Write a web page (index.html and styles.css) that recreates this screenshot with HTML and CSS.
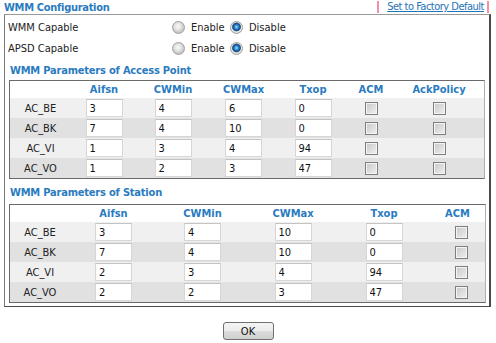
FILE: index.html
```html
<!DOCTYPE html>
<html lang="en">
<head>
<meta charset="utf-8">
<title>WMM Configuration</title>
<link rel="stylesheet" href="styles.css">
</head>
<body>
<div class="head">
	<span class="title">WMM Configuration</span>
	<span class="reset"><a href="#">Set to Factory Default</a></span>
</div>

<div class="box">
	<div class="opt">
		<span class="opt-label">WMM Capable</span>
		<label class="choice"><input type="radio" name="wmm"> Enable</label>
		<label class="choice"><input type="radio" name="wmm" checked> Disable</label>
	</div>
	<div class="opt">
		<span class="opt-label">APSD Capable</span>
		<label class="choice"><input type="radio" name="apsd"> Enable</label>
		<label class="choice"><input type="radio" name="apsd" checked> Disable</label>
	</div>

	<div class="sect">WMM Parameters of Access Point</div>
	<table class="params ap">
		<colgroup>
			<col class="c1"><col class="c2"><col class="c3"><col class="c4"><col class="c5"><col class="c6"><col class="c7">
		</colgroup>
		<tr class="hdr"><th></th><th>Aifsn</th><th>CWMin</th><th>CWMax</th><th>Txop</th><th>ACM</th><th>AckPolicy</th></tr>
		<tr class="odd"><td class="name">AC_BE</td><td><input class="num" value="3"></td><td><input class="num" value="4"></td><td><input class="num" value="6"></td><td><input class="num" value="0"></td><td><input type="checkbox" class="box-chk"></td><td><input type="checkbox" class="box-chk"></td></tr>
		<tr class="even"><td class="name">AC_BK</td><td><input class="num" value="7"></td><td><input class="num" value="4"></td><td><input class="num" value="10"></td><td><input class="num" value="0"></td><td><input type="checkbox" class="box-chk"></td><td><input type="checkbox" class="box-chk"></td></tr>
		<tr class="odd"><td class="name">AC_VI</td><td><input class="num" value="1"></td><td><input class="num" value="3"></td><td><input class="num" value="4"></td><td><input class="num" value="94"></td><td><input type="checkbox" class="box-chk"></td><td><input type="checkbox" class="box-chk"></td></tr>
		<tr class="even"><td class="name">AC_VO</td><td><input class="num" value="1"></td><td><input class="num" value="2"></td><td><input class="num" value="3"></td><td><input class="num" value="47"></td><td><input type="checkbox" class="box-chk"></td><td><input type="checkbox" class="box-chk"></td></tr>
	</table>

	<div class="sect sect2">WMM Parameters of Station</div>
	<table class="params sta">
		<colgroup>
			<col class="c1"><col class="c2"><col class="c3"><col class="c4"><col class="c5"><col class="c6">
		</colgroup>
		<tr class="hdr"><th></th><th>Aifsn</th><th>CWMin</th><th>CWMax</th><th>Txop</th><th>ACM</th></tr>
		<tr class="odd"><td class="name">AC_BE</td><td><input class="num" value="3"></td><td><input class="num" value="4"></td><td><input class="num" value="10"></td><td><input class="num" value="0"></td><td class="acm"><input type="checkbox" class="box-chk"></td></tr>
		<tr class="even"><td class="name">AC_BK</td><td><input class="num" value="7"></td><td><input class="num" value="4"></td><td><input class="num" value="10"></td><td><input class="num" value="0"></td><td class="acm"><input type="checkbox" class="box-chk"></td></tr>
		<tr class="odd"><td class="name">AC_VI</td><td><input class="num" value="2"></td><td><input class="num" value="3"></td><td><input class="num" value="4"></td><td><input class="num" value="94"></td><td class="acm"><input type="checkbox" class="box-chk"></td></tr>
		<tr class="even"><td class="name">AC_VO</td><td><input class="num" value="2"></td><td><input class="num" value="2"></td><td><input class="num" value="3"></td><td><input class="num" value="47"></td><td class="acm"><input type="checkbox" class="box-chk"></td></tr>
	</table>
</div>

<div class="actions"><button type="button" class="btn">OK</button></div>
</body>
</html>
```

FILE: styles.css
```css
body { margin: 0px; background-color: #FFFFFF; color: #222222;
       font-family: "DejaVu Sans Condensed", "DejaVu Sans", sans-serif; font-stretch: condensed;
       font-size: 11px; width: 496px; }

/* title bar */
.head { display: flex; justify-content: space-between; align-items: center; height: 14px; }
.title { padding-left: 4px; font-weight: bold; color: #2A7BC0; letter-spacing: -0.3px; }
.reset { margin-right: 7px; padding-left: 8px; padding-right: 3px; line-height: 12px;
         border-left: 2px solid #F48FA4; border-right: 2px solid #F48FA4; }
.reset a { color: #1F73B8; text-decoration: underline; letter-spacing: -0.5px; }

/* outer frame */
.box { margin-left: 4px; width: 484px; padding-bottom: 3px;
       border-top: 1px solid #9A9A9A; border-left: 1px solid #7A7A7A;
       border-right: 2px solid #4A4A4A; border-bottom: 1px solid #4A4A4A; }

.opt { display: flex; align-items: center; height: 20px; padding-left: 3px; margin-top: 1px; }
.opt:first-child { margin-top: 2px; }
.opt-label { width: 164px; color: #222222; }
.choice { display: flex; align-items: center; width: 58px; color: #222222; }
.choice input { appearance: none; -webkit-appearance: none; margin: 0px 6px 0px 0px;
                width: 13px; height: 13px; border-radius: 50%; border: 1px solid #A0A0A0;
                background: radial-gradient(circle at 45% 40%, #FAFAFA 0px, #E6E6E6 3px, #C6C6C6 6px); }
.choice input:checked {
  background: radial-gradient(circle at 50% 45%, #A8E0FF 0px, #2C8AD0 2px, #124C8C 3.5px, #5A6E88 4.2px, #EDEDED 4.8px, #D0D0D0 6.5px); }

.sect { margin-top: 6px; margin-left: 5px; height: 14px; line-height: 14px;
        font-weight: bold; color: #2A7BC0; letter-spacing: -0.2px; }
.sect2 { margin-top: 7px; }

/* parameter tables */
.params { margin-top: 2px; margin-left: 4px; border-spacing: 0px; table-layout: fixed;
          border-top: 1px solid #6A6A6A; border-left: 1px solid #6A6A6A;
          border-right: 1px solid #B0B0B0; border-bottom: 1px solid #6A6A6A; }
.ap { width: 476px; }
.sta { width: 477px; margin-top: 4px; }
.params td, .params th { padding: 0px; text-align: center; vertical-align: middle; }
.params th { color: #2A7BC0; font-weight: bold; }
.hdr { height: 17px; background-color: #FFFFFF; }
.odd { height: 20px; background-color: #F0F0F0; }
.even { height: 20px; background-color: #E1E1E1; }
.name { color: #222222; }

.ap .c1 { width: 61px; } .ap .c2 { width: 66px; } .ap .c3 { width: 72px; } .ap .c4 { width: 69px; }
.ap .c5 { width: 70px; } .ap .c6 { width: 46px; } .ap .c7 { width: 90px; }
.sta .c1 { width: 60px; } .sta .c2 { width: 87px; } .sta .c3 { width: 91px; } .sta .c4 { width: 90px; }
.sta .c5 { width: 92px; } .sta .c6 { width: 55px; }
.sta .acm { padding-left: 8px; }

.num { box-sizing: border-box; width: 37px; height: 18px; margin: 0px; padding: 0px 0px 0px 3px;
       vertical-align: middle; font-family: inherit; font-size: 11px; color: #111111;
       background: #FFFFFF; border: 1px solid #D6D6D6; border-top-color: #C4C4C4; }
.box-chk { appearance: none; -webkit-appearance: none; box-sizing: border-box; margin: 0px;
           width: 13px; height: 13px; vertical-align: middle;
           border: 1px solid #7E7E7E; box-shadow: inset 0px 0px 0px 1px #F4F4F4;
           background: linear-gradient(135deg, #C8C8C8, #F0F0F0); }

.actions { display: flex; justify-content: center; padding-top: 15px; }
.btn { box-sizing: border-box; width: 51px; height: 18px; padding: 0px;
       font-family: inherit; font-size: 11px; color: #111111;
       border: 1px solid #707070; border-radius: 3px;
       background: linear-gradient(#F4F4F4, #EBEBEB 50%, #DDDDDD 50%, #CFCFCF); }
```
